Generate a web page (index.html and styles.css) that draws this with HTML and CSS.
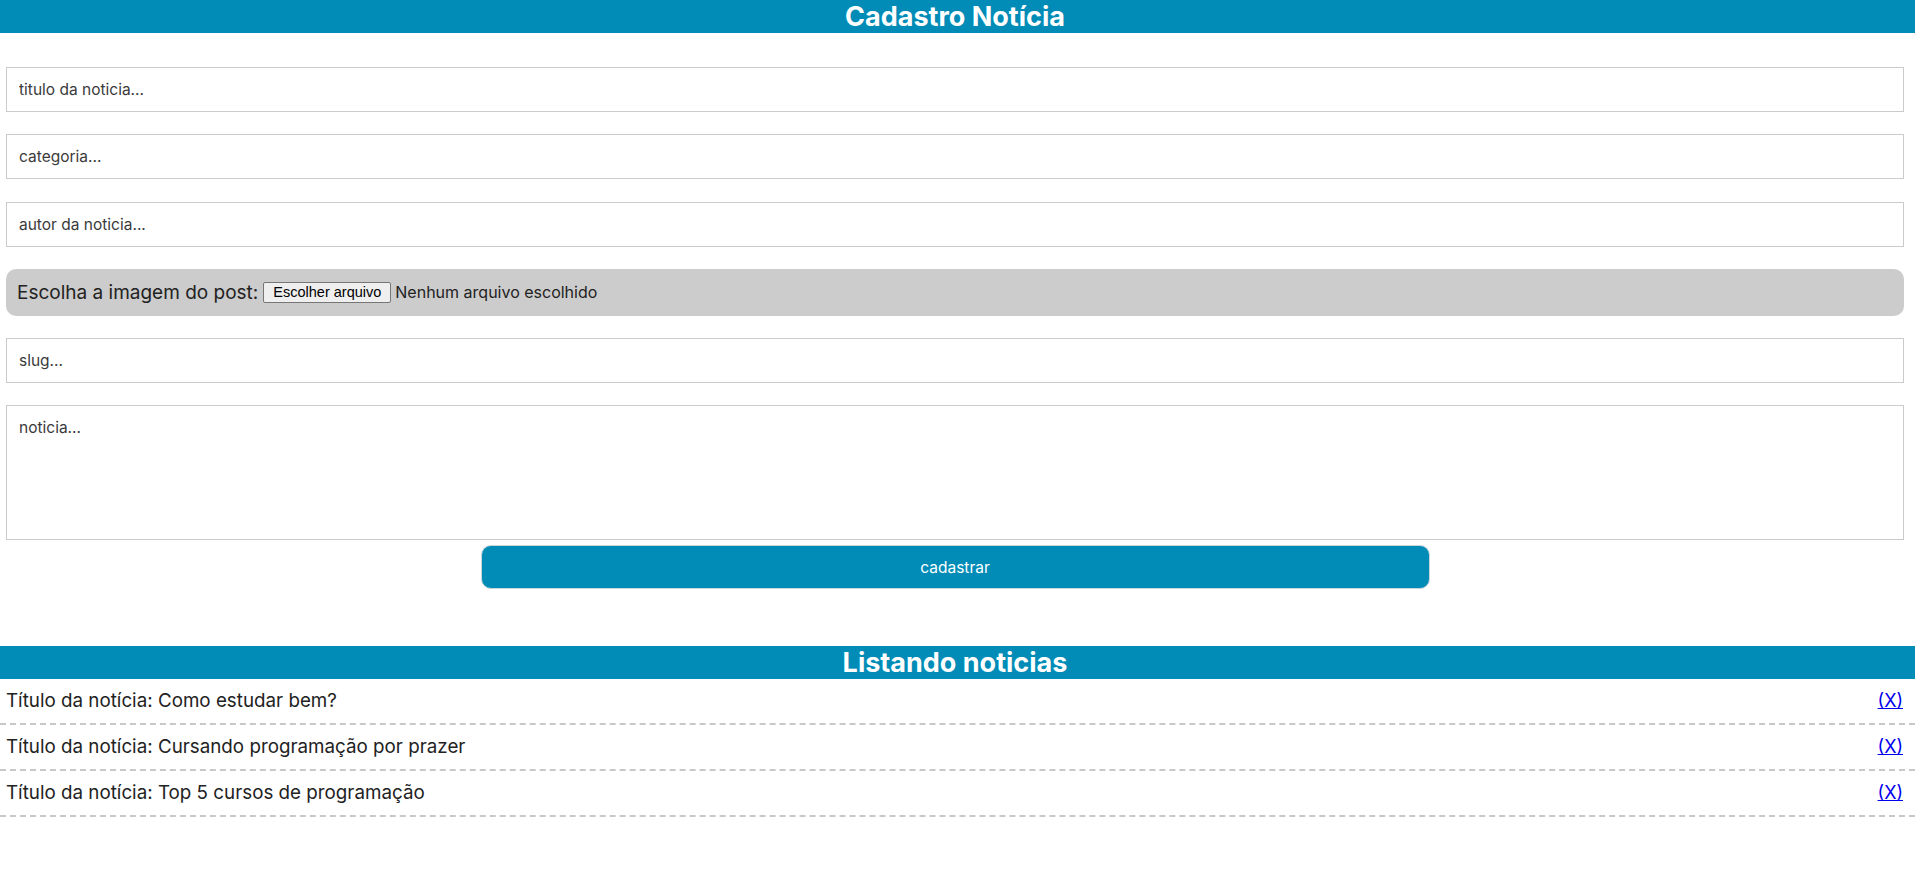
FILE: index.html
```html
<!DOCTYPE html>
<html lang="pt-BR">
<head>
<meta charset="utf-8">
<title>Cadastro Notícia</title>
<link rel="stylesheet" href="styles.css">
</head>
<body>
<header class="bar">
  <h1 class="bar-title">Cadastro Notícia</h1>
</header>
<form class="form">
  <input class="field" type="text" placeholder="titulo da noticia...">
  <input class="field" type="text" placeholder="categoria...">
  <input class="field" type="text" placeholder="autor da noticia...">
  <div class="file-box">
    <span class="file-label">Escolha a imagem do post:</span>
    <span class="file-btn">Escolher arquivo</span>
    <span class="file-status">Nenhum arquivo escolhido</span>
  </div>
  <input class="field" type="text" placeholder="slug...">
  <textarea class="field area" placeholder="noticia..."></textarea>
  <button class="submit" type="button">cadastrar</button>
</form>
<section class="list">
  <div class="bar">
    <h2 class="bar-title">Listando noticias</h2>
  </div>
  <ul class="rows">
    <li class="row"><span>Título da notícia: Como estudar bem?</span><a href="#" class="del">(X)</a></li>
    <li class="row"><span>Título da notícia: Cursando programação por prazer</span><a href="#" class="del">(X)</a></li>
    <li class="row"><span>Título da notícia: Top 5 cursos de programação</span><a href="#" class="del">(X)</a></li>
  </ul>
</section>
</body>
</html>
```
FILE: styles.css
```css
* { box-sizing: border-box; }
body {
  margin: 0;
  font-family: Inter, "Open Sans", sans-serif;
  color: #222;
  background: #fff;
}
.bar {
  background: #008cb7;
  height: 33px;
  padding: 0 11px 0 6px;
}
.bar-title {
  margin: 0;
  color: #fff;
  font-size: 27px;
  font-weight: 700;
  line-height: 33px;
  text-align: center;
}
.form {
  padding: 34px 11px 0 6px;
  margin: 0 0 57px;
}
.field {
  display: block;
  width: 100%;
  height: 45px;
  margin: 0 0 22.3px;
  padding: 0 12px;
  border: 1px solid #cbcbcb;
  font-family: inherit;
  font-size: 15.5px;
  color: #222;
  background: #fff;
  outline: none;
}
.field::placeholder { color: #3a3a3a; }
.area {
  height: 135px;
  padding: 12px;
  resize: none;
  margin-bottom: 5px;
}
.file-box {
  display: flex;
  align-items: center;
  height: 47px;
  margin: 0 0 22.3px;
  padding: 0 11px;
  background: #cccccc;
  border-radius: 10px;
}
.file-label {
  font-size: 19px;
  color: #222;
}
.file-btn {
  margin-left: 5px;
  height: 21px;
  padding: 0 9px;
  display: inline-flex;
  align-items: center;
  border: 1px solid #767676;
  border-radius: 2px;
  background: #efefef;
  font-family: "Liberation Sans", Arial, sans-serif;
  font-size: 14.5px;
  color: #000;
}
.file-status {
  margin-left: 4px;
  font-size: 16px;
  color: #222;
}
.submit {
  display: block;
  width: 50%;
  height: 44px;
  margin: 0 auto;
  border: 1px solid #c9d6db;
  border-radius: 10px;
  background: #008cb7;
  color: #fff;
  font-family: inherit;
  font-size: 15.5px;
}
.rows {
  list-style: none;
  margin: 0;
  padding: 0;
}
.row {
  display: flex;
  justify-content: space-between;
  align-items: center;
  padding: 11px 12px 11px 6px;
  border-bottom: 2px dashed #c8c8c8;
  font-size: 18.8px;
  line-height: 22px;
}
.del {
  color: #0000ee;
  text-decoration: underline;
  font-size: 18px;
}
```
